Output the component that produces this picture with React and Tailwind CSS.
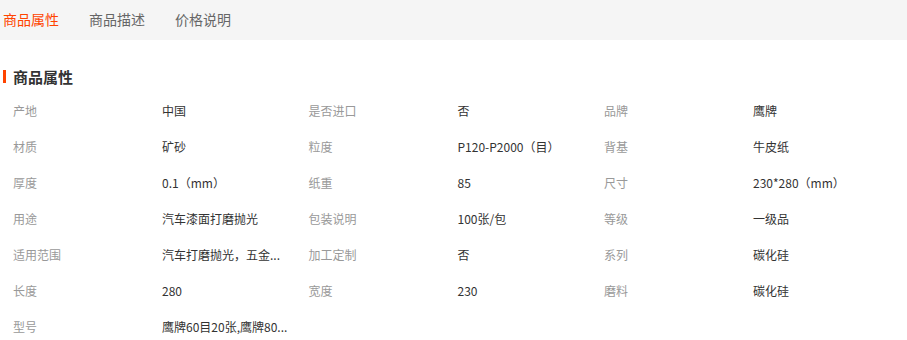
import React, { useState } from "react";

const tabs = ["商品属性", "商品描述", "价格说明"];

// 属性表：每行三组 [名称, 值]
const attrs = [
  ["产地", "中国"],
  ["是否进口", "否"],
  ["品牌", "鹰牌"],
  ["材质", "矿砂"],
  ["粒度", "P120-P2000（目）"],
  ["背基", "牛皮纸"],
  ["厚度", "0.1（mm）"],
  ["纸重", "85"],
  ["尺寸", "230*280（mm）"],
  ["用途", "汽车漆面打磨抛光"],
  ["包装说明", "100张/包"],
  ["等级", "一级品"],
  ["适用范围", "汽车打磨抛光，五金..."],
  ["加工定制", "否"],
  ["系列", "碳化硅"],
  ["长度", "280"],
  ["宽度", "230"],
  ["磨料", "碳化硅"],
  ["型号", "鹰牌60目20张,鹰牌80..."],
];

export default function App() {
  const [active, setActive] = useState(0);

  return (
    <div
      className="w-[907px] h-[340px] overflow-hidden bg-white"
      style={{ fontFamily: '"Noto Sans CJK SC", "Liberation Sans", sans-serif' }}
    >
      {/* 顶部标签栏 */}
      <div className="h-10 bg-[#f5f5f5] flex items-center pl-[3px] gap-[30px] pb-[3px]">
        {tabs.map((t, i) => (
          <button
            key={t}
            onClick={() => setActive(i)}
            className={`text-[14px] leading-none ${
              i === active ? "text-[#ff4400]" : "text-[#666]"
            }`}
          >
            {t}
          </button>
        ))}
      </div>

      {/* 标题 */}
      <div className="flex items-center gap-[7px] pl-[3px] mt-[29px] h-[14px]">
        <span className="w-[3px] h-[13px] bg-[#ff4400]" />
        <h3 className="text-[15px] font-bold text-[#333] leading-none">商品属性</h3>
      </div>

      {/* 属性列表 */}
      <div className="grid grid-cols-[repeat(3,295.5px)] pl-[13px] mt-[10px]">
        {attrs.map(([k, v]) => (
          <div key={k} className="flex items-center h-9 text-[12px]">
            <span className="w-[149px] text-[#999]">{k}</span>
            <span className="text-[#333]">{v}</span>
          </div>
        ))}
      </div>
    </div>
  );
}
